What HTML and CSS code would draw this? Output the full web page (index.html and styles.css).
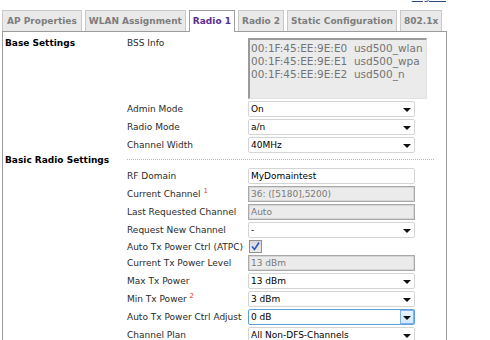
FILE: index.html
```html
<!DOCTYPE html>
<html lang="en">
<head>
    <meta charset="UTF-8">
    <title>Radio 1</title>
    <link rel="stylesheet" href="styles.css">
</head>
<body>
<div class="page">
    <div class="topbar"><a href="#" class="logout">Logout</a></div>

    <ul class="tabs">
        <li>AP Properties</li>
        <li>WLAN Assignment</li>
        <li class="active">Radio 1</li>
        <li>Radio 2</li>
        <li>Static Configuration</li>
        <li>802.1x</li>
    </ul>

    <div class="panel">
        <div class="form">
            <div class="section">Base Settings</div>
            <label class="label top">BSS Info</label>
            <textarea class="bss" readonly>00:1F:45:EE:9E:E0  usd500_wlan
00:1F:45:EE:9E:E1  usd500_wpa
00:1F:45:EE:9E:E2  usd500_n</textarea>

            <label class="label">Admin Mode</label>
            <span class="select"><select><option>On</option></select></span>

            <label class="label">Radio Mode</label>
            <span class="select"><select><option>a/n</option></select></span>

            <label class="label">Channel Width</label>
            <span class="select"><select><option>40MHz</option></select></span>

            <div class="section">Basic Radio Settings</div>
            <div class="separator"></div>

            <label class="label">RF Domain</label>
            <input class="text" type="text" value="MyDomaintest">

            <label class="label">Current Channel <sup class="note">1</sup></label>
            <input class="text" type="text" value="36: ([5180],5200)" disabled>

            <label class="label">Last Requested Channel</label>
            <input class="text" type="text" value="Auto" disabled>

            <label class="label">Request New Channel</label>
            <span class="select"><select><option>-</option></select></span>

            <label class="label">Auto Tx Power Ctrl (ATPC)</label>
            <span class="check">
                <svg width="11" height="11" viewBox="0 0 11 11"><path d="M2 5.5 L4.5 8.5 L9 1.5" fill="none" stroke="#2b56c4" stroke-width="1.6"/></svg>
            </span>

            <label class="label">Current Tx Power Level</label>
            <input class="text" type="text" value="13 dBm" disabled>

            <label class="label">Max Tx Power</label>
            <span class="select"><select><option>13 dBm</option></select></span>

            <label class="label">Min Tx Power <sup class="note">2</sup></label>
            <span class="select"><select><option>3 dBm</option></select></span>

            <label class="label">Auto Tx Power Ctrl Adjust</label>
            <span class="select focus"><select><option>0 dB</option></select></span>

            <label class="label">Channel Plan</label>
            <span class="select"><select><option>All Non-DFS-Channels</option></select></span>
        </div>
    </div>
</div>
</body>
</html>
```

FILE: styles.css
```css
body {
    margin: 0;
    font-family: "DejaVu Sans", sans-serif;
    font-size: 9px;
    color: #222;
    background-color: #fff;
}
.page {
    width: 445px;
    margin-left: 2px;
}
.topbar {
    height: 10px;
    overflow: hidden;
    display: flex;
    justify-content: flex-end;
    padding-right: 1px;
}
.logout {
    margin-top: -9px;
    line-height: 12px;
    font-size: 10px;
    color: #2c4a7c;
}
.tabs {
    display: flex;
    gap: 3px;
    margin: 0;
    padding: 0;
    list-style: none;
}
.tabs li {
    height: 20px;
    line-height: 20px;
    padding: 0 3px;
    border: 1px solid #c9c9c9;
    border-bottom: none;
    background-color: #e9e9e9;
    color: #7d7d7d;
    font-weight: bold;
    white-space: nowrap;
}
.tabs li:first-child {
    padding: 0 4px;
}
.tabs li.active {
    height: 21px;
    margin-bottom: -1px;
    background-color: #fff;
    border-color: #9c9c9c;
    color: #5a2d91;
    position: relative;
}
.panel {
    height: 302px;
    overflow: hidden;
    border: 1px solid #9c9c9c;
    border-bottom: none;
    padding: 6px 0 0 2px;
}
.form {
    display: grid;
    grid-template-columns: 122px 121px 1fr;
    row-gap: 2px;
    align-items: center;
}
.section {
    grid-column: 1;
    font-weight: bold;
    color: #000;
    line-height: 11px;
    align-self: start;
}
.label {
    grid-column: 2;
    color: #2a2a2a;
    white-space: nowrap;
}
.label.top {
    align-self: start;
    line-height: 11px;
}
.note {
    color: #ee3b2b;
    font-size: 7px;
    line-height: 0;
}
.separator {
    grid-column: 2 / 4;
    align-self: start;
    margin-top: 4px;
    margin-right: 12px;
    border-top: 1px dotted #b5b5b5;
}
.bss {
    grid-column: 3;
    width: 179px;
    height: 61px;
    box-sizing: border-box;
    margin: 0;
    padding: 2px 0 0 1px;
    resize: none;
    font-family: "DejaVu Sans", sans-serif;
    font-size: 10.5px;
    line-height: 13px;
    color: #747474;
    background-color: #ebebeb;
    border-style: solid;
    border-width: 2px 1px 1px 2px;
    border-color: #9a9a9a #e2e2e2 #e2e2e2 #9a9a9a;
    outline: none;
}
.select {
    grid-column: 3;
    position: relative;
    display: block;
    width: 167px;
    height: 16px;
}
.select select {
    appearance: none;
    -webkit-appearance: none;
    width: 100%;
    height: 100%;
    margin: 0;
    padding: 0 0 0 2px;
    box-sizing: border-box;
    border: 1px solid #d4d4d4;
    border-radius: 2px;
    background-color: #fff;
    font: inherit;
    color: #000;
    outline: none;
}
.select::after {
    content: "";
    position: absolute;
    right: 4px;
    top: 7px;
    border-left: 4px solid transparent;
    border-right: 4px solid transparent;
    border-top: 4px solid #111;
    pointer-events: none;
}
.select.focus select {
    border-color: #5a9fe0;
}
.select.focus::before {
    content: "";
    position: absolute;
    right: 1px;
    top: 1px;
    bottom: 1px;
    width: 14px;
    background: linear-gradient(#eaf4fd, #d3e8fb);
    border: 1px solid #7fb2e6;
    box-sizing: border-box;
    pointer-events: none;
}
.text {
    grid-column: 3;
    width: 167px;
    height: 16px;
    box-sizing: border-box;
    margin: 0;
    padding: 0 0 0 2px;
    border: 1px solid #d4d4d4;
    border-radius: 2px;
    font: inherit;
    color: #000;
    background-color: #fff;
    outline: none;
}
.text:disabled {
    border-radius: 0;
    border-color: #a9a9a9;
    box-shadow: inset 0 0 0 1px #d6d6d6;
    background-color: #ebebeb;
    color: #7a7a7a;
}
.check {
    grid-column: 3;
    width: 13px;
    height: 13px;
    margin-left: 1px;
    box-sizing: border-box;
    border: 1px solid #8e8f8f;
    background: linear-gradient(#d8d8d8, #ececec);
    display: flex;
    align-items: center;
    justify-content: center;
}
```
